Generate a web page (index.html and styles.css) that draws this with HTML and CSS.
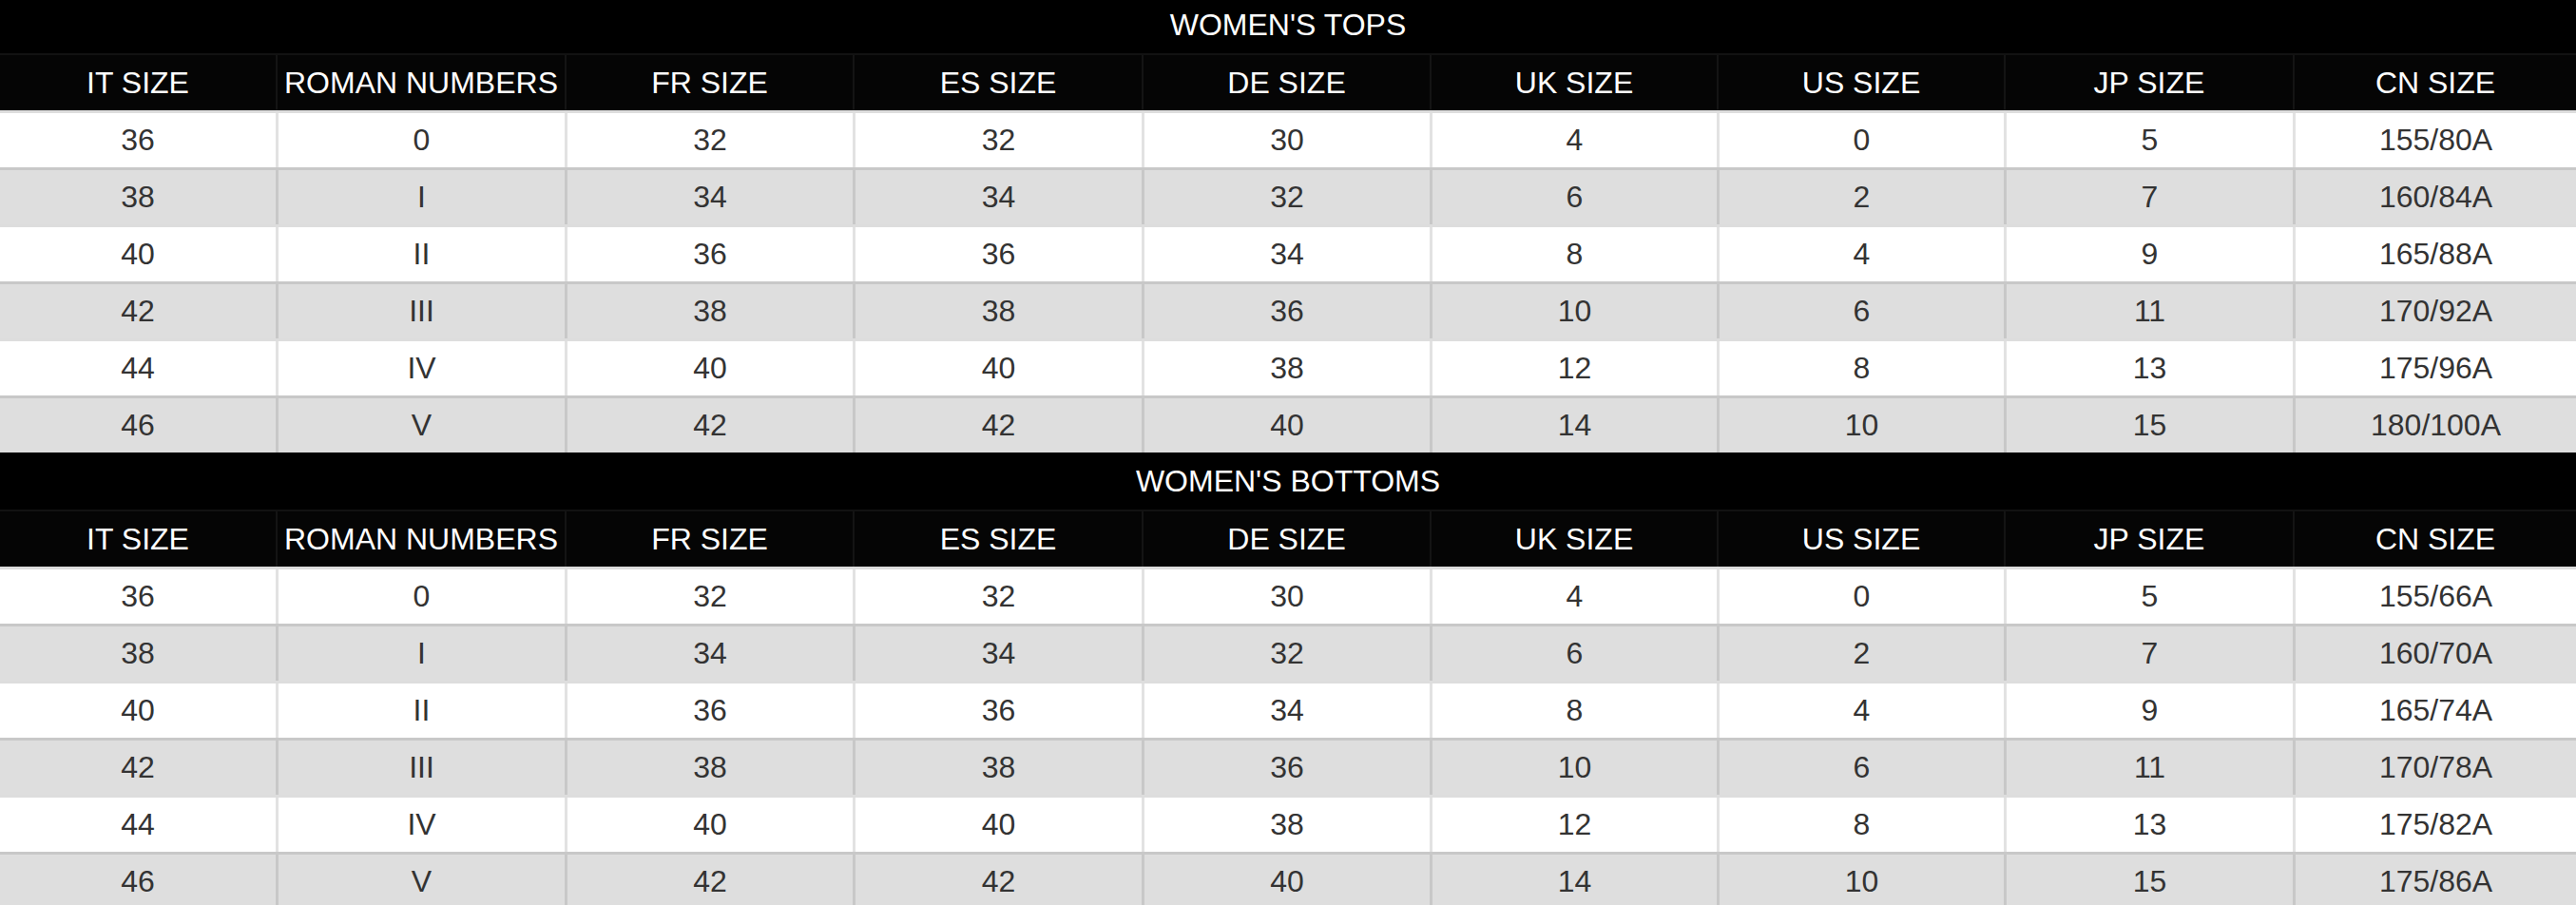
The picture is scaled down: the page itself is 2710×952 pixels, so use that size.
FILE: index.html
```html
<!DOCTYPE html>
<html lang="en">
<head>
<meta charset="utf-8">
<title>Women's Size Chart</title>
<link rel="stylesheet" href="styles.css">
</head>
<body>
<main class="sheet">
  <section class="chart">
    <div class="chart-title">WOMEN'S TOPS</div>
    <div class="row head">
      <div class="cell">IT SIZE</div><div class="cell">ROMAN NUMBERS</div><div class="cell">FR SIZE</div><div class="cell">ES SIZE</div><div class="cell">DE SIZE</div><div class="cell">UK SIZE</div><div class="cell">US SIZE</div><div class="cell">JP SIZE</div><div class="cell">CN SIZE</div>
    </div>
    <div class="row data odd"><div class="cell">36</div><div class="cell">0</div><div class="cell">32</div><div class="cell">32</div><div class="cell">30</div><div class="cell">4</div><div class="cell">0</div><div class="cell">5</div><div class="cell">155/80A</div></div>
    <div class="row data even"><div class="cell">38</div><div class="cell">I</div><div class="cell">34</div><div class="cell">34</div><div class="cell">32</div><div class="cell">6</div><div class="cell">2</div><div class="cell">7</div><div class="cell">160/84A</div></div>
    <div class="row data odd"><div class="cell">40</div><div class="cell">II</div><div class="cell">36</div><div class="cell">36</div><div class="cell">34</div><div class="cell">8</div><div class="cell">4</div><div class="cell">9</div><div class="cell">165/88A</div></div>
    <div class="row data even"><div class="cell">42</div><div class="cell">III</div><div class="cell">38</div><div class="cell">38</div><div class="cell">36</div><div class="cell">10</div><div class="cell">6</div><div class="cell">11</div><div class="cell">170/92A</div></div>
    <div class="row data odd"><div class="cell">44</div><div class="cell">IV</div><div class="cell">40</div><div class="cell">40</div><div class="cell">38</div><div class="cell">12</div><div class="cell">8</div><div class="cell">13</div><div class="cell">175/96A</div></div>
    <div class="row data even"><div class="cell">46</div><div class="cell">V</div><div class="cell">42</div><div class="cell">42</div><div class="cell">40</div><div class="cell">14</div><div class="cell">10</div><div class="cell">15</div><div class="cell">180/100A</div></div>
  </section>
  <section class="chart">
    <div class="chart-title">WOMEN'S BOTTOMS</div>
    <div class="row head">
      <div class="cell">IT SIZE</div><div class="cell">ROMAN NUMBERS</div><div class="cell">FR SIZE</div><div class="cell">ES SIZE</div><div class="cell">DE SIZE</div><div class="cell">UK SIZE</div><div class="cell">US SIZE</div><div class="cell">JP SIZE</div><div class="cell">CN SIZE</div>
    </div>
    <div class="row data odd"><div class="cell">36</div><div class="cell">0</div><div class="cell">32</div><div class="cell">32</div><div class="cell">30</div><div class="cell">4</div><div class="cell">0</div><div class="cell">5</div><div class="cell">155/66A</div></div>
    <div class="row data even"><div class="cell">38</div><div class="cell">I</div><div class="cell">34</div><div class="cell">34</div><div class="cell">32</div><div class="cell">6</div><div class="cell">2</div><div class="cell">7</div><div class="cell">160/70A</div></div>
    <div class="row data odd"><div class="cell">40</div><div class="cell">II</div><div class="cell">36</div><div class="cell">36</div><div class="cell">34</div><div class="cell">8</div><div class="cell">4</div><div class="cell">9</div><div class="cell">165/74A</div></div>
    <div class="row data even"><div class="cell">42</div><div class="cell">III</div><div class="cell">38</div><div class="cell">38</div><div class="cell">36</div><div class="cell">10</div><div class="cell">6</div><div class="cell">11</div><div class="cell">170/78A</div></div>
    <div class="row data odd"><div class="cell">44</div><div class="cell">IV</div><div class="cell">40</div><div class="cell">40</div><div class="cell">38</div><div class="cell">12</div><div class="cell">8</div><div class="cell">13</div><div class="cell">175/82A</div></div>
    <div class="row data even"><div class="cell">46</div><div class="cell">V</div><div class="cell">42</div><div class="cell">42</div><div class="cell">40</div><div class="cell">14</div><div class="cell">10</div><div class="cell">15</div><div class="cell">175/86A</div></div>
  </section>
</main>
</body>
</html>
```
FILE: styles.css
```css
html, body {
  margin: 0;
  padding: 0;
  background: #ffffff;
}
body {
  overflow: hidden;
  font-family: "Liberation Sans", Arial, sans-serif;
  font-size: 32px;
}
.sheet {
  margin-top: -4px;
  display: flex;
  flex-direction: column;
}
.chart {
  display: flex;
  flex-direction: column;
}
.chart-title {
  height: 62px;
  box-sizing: border-box;
  border-bottom: 2px solid #121212;
  background: #000000;
  color: #ffffff;
  display: flex;
  align-items: center;
  justify-content: center;
}
.row {
  display: grid;
  grid-template-columns: 290px 304px 303px 304px 303px 302px 302px 304px 1fr;
  box-sizing: border-box;
}
.cell {
  display: flex;
  align-items: center;
  justify-content: center;
  box-sizing: border-box;
  white-space: nowrap;
}
.head {
  height: 58px;
  background: #050505;
  color: #ffffff;
}
.head .cell + .cell {
  border-left: 2px solid #141414;
}
.data {
  height: 60px;
  border-top: 3px solid;
  color: #333333;
}
.data .cell + .cell {
  border-left: 3px solid;
}
.odd {
  background: #ffffff;
  border-top-color: #dddddd;
}
.odd .cell + .cell {
  border-left-color: #e2e2e2;
}
.even {
  background: #dedede;
  border-top-color: #c8c8c8;
}
.even .cell + .cell {
  border-left-color: #c8c8c8;
}
```
